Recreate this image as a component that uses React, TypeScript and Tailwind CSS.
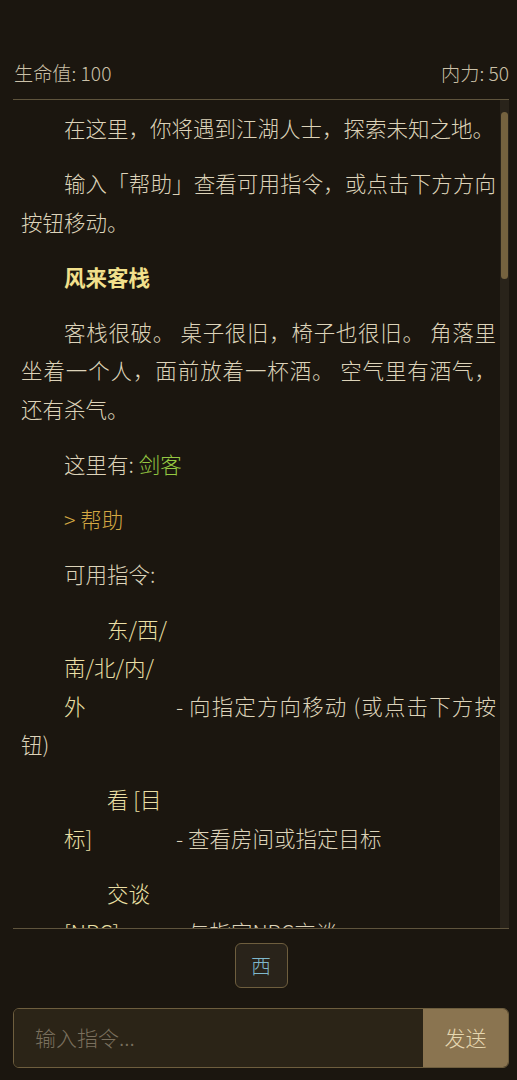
import { useState } from "react";

type Command = {
  name: string;
  desc: string;
};

const commands: Command[] = [
  { name: "东/西/南/北/内/外", desc: "- 向指定方向移动 (或点击下方按钮)" },
  { name: "看 [目标]", desc: "- 查看房间或指定目标" },
  { name: "交谈 [NPC]", desc: "- 与指定NPC交谈" },
  { name: "状态", desc: "- 查看自身状态" },
  { name: "帮助", desc: "- 显示本帮助" },
];

const para = "mb-[16.4px] indent-[2em] text-justify";

export default function App() {
  const [input, setInput] = useState("");

  return (
    <div className="flex h-[1080px] flex-col bg-[#1b160f] pr-[8px] pb-[12px] pl-[13px] font-['Noto_Sans_CJK_SC',sans-serif] font-light text-[#ddd3b9]">
      {/* status bar */}
      <div className="flex items-center justify-between border-b border-[#5f543d] pt-[60px] pb-[12px] text-[19.2px] leading-[27px] text-[#cbc1a8]">
        <span className="pl-px">生命值: 100</span>
        <span>内力: 50</span>
      </div>

      {/* log */}
      <div className="flex min-h-0 flex-1 border-b border-[#5f543d]">
        <div className="min-w-0 flex-1 overflow-hidden pt-[9px] pr-[4px] pl-[8px] text-[21.5px] leading-[38.6px]">
          <p className={para}>在这里，你将遇到江湖人士，探索未知之地。</p>
          <p className={para}>输入「帮助」查看可用指令，或点击下方方向按钮移动。</p>
          <p className={`${para} font-bold text-[#f2e08c]`}>风来客栈</p>
          <p className={para}>
            客栈很破。 桌子很旧，椅子也很旧。 角落里坐着一个人，面前放着一杯酒。 空气里有酒气，还有杀气。
          </p>
          <p className={para}>
            这里有: <span className="text-[#95c842]">剑客</span>
          </p>
          <p className={`${para} text-[#d4a843]`}>&gt; 帮助</p>
          <p className={para}>可用指令:</p>
          {commands.map((cmd) => (
            <p key={cmd.name} className={para}>
              <span className="mr-[8px] inline-block w-[104px] text-left text-[#ece0a6]">{cmd.name}</span>
              {cmd.desc}
            </p>
          ))}
        </div>
        <div className="w-[9px] bg-[#29231a]">
          <div className="mx-px mt-[12px] h-[167px] rounded-full bg-[#75623f]" />
        </div>
      </div>

      {/* direction buttons */}
      <div className="mt-[14px] flex justify-center gap-2">
        <button
          type="button"
          className="h-[45px] w-[53px] rounded-[6px] border border-[#6e5e3e] bg-[#29231a] text-[20px] text-[#7fb8cc]"
        >
          西
        </button>
      </div>

      {/* input */}
      <div className="mt-[20px] flex h-[60px] overflow-hidden rounded-[6px] border border-[#6e5e3e]">
        <input
          value={input}
          onChange={(e) => setInput(e.target.value)}
          placeholder="输入指令..."
          className="min-w-0 flex-1 bg-[#2b2417] px-[21px] text-[21px] font-light text-[#ddd3b9] outline-none placeholder:text-[#7a705e]"
        />
        <button type="button" className="w-[85px] bg-[#8a7450] text-[21px] font-light text-[#e6d7b0]">
          发送
        </button>
      </div>
    </div>
  );
}
